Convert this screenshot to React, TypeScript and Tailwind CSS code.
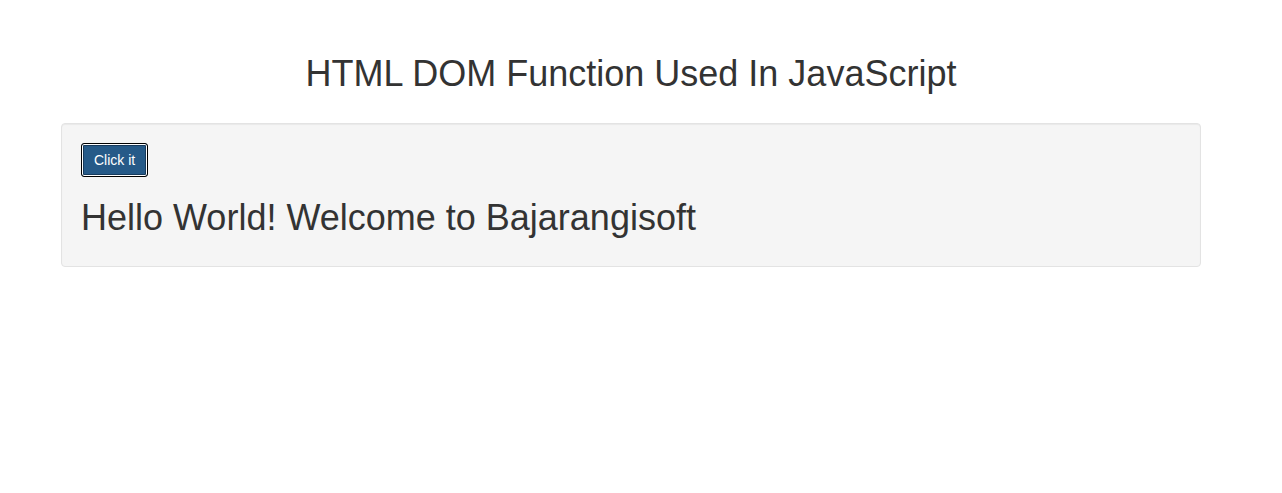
import React from 'react';

const App: React.FC = () => {
  return (
    <div className="min-h-[493px] bg-white text-[#333] font-['Liberation_Sans',Arial,sans-serif]">
      <div className="w-[1140px] ml-[61px] pt-[54px]">
        <h2 className="text-center text-[36px] leading-[40px]">
          HTML DOM Function Used In JavaScript
        </h2>

        {/* Well */}
        <div className="mt-[29px] bg-[#f5f5f5] border border-[#e3e3e3] rounded-[4px] px-[19px] pt-[19px] pb-[28px] shadow-[inset_0_1px_1px_rgba(0,0,0,0.05)]">
          <button className="h-[34px] px-[12px] text-[14px] text-white bg-[#265a88] border border-black rounded-[3px] shadow-[inset_0_0_0_1px_#fff,inset_0_0_0_2px_#163a5c]">
            Click it
          </button>
          <h2 className="mt-[21px] text-[36px] leading-[40px]">
            Hello World! Welcome to Bajarangisoft
          </h2>
        </div>
      </div>
    </div>
  );
};

export default App;
